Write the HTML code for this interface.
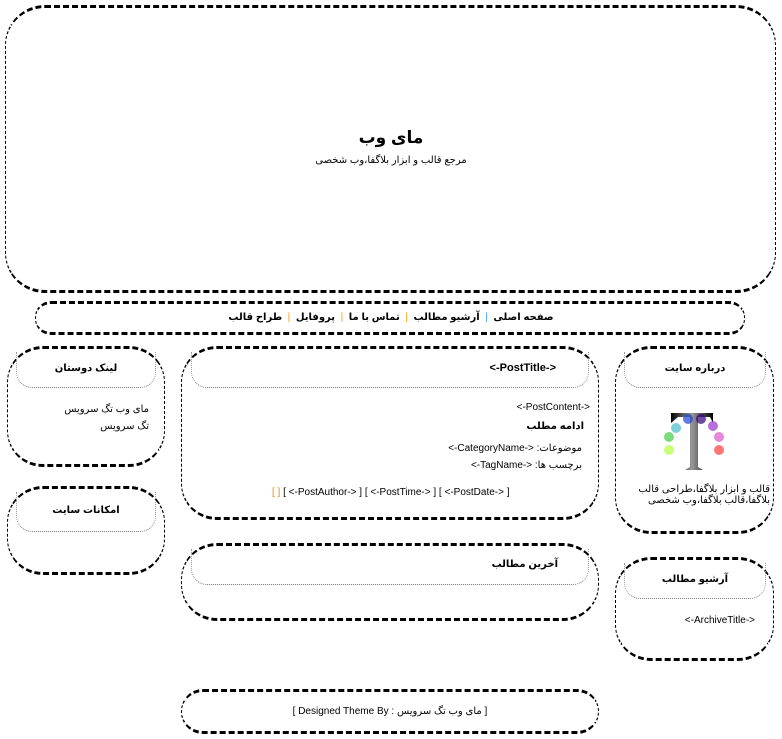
<!DOCTYPE html>
<html dir="rtl"><head><meta charset="utf-8"><style>
*{margin:0;padding:0;box-sizing:border-box}
body{width:782px;height:739px;background:#fff;position:relative;font-family:"Liberation Sans","DejaVu Sans",sans-serif;font-size:10px;color:#000;overflow:hidden}
.b{position:absolute;border-top:3px dashed #000;border-bottom:3px dashed #000;border-left:1px dashed #000;border-right:1px dashed #000;border-radius:36px}
.h{position:absolute;border-bottom:1px dotted #777;border-left:1px dotted #999;border-right:1px dotted #999;border-top:none;border-radius:0 0 16px 16px;text-align:center;font-weight:bold;font-size:10px}
.t{position:absolute;direction:rtl;white-space:nowrap}
</style></head><body>
<div class="b" style="left:5px;top:5px;width:771px;height:288px;border-radius:40px"></div>
<div class="t" style="left:0;width:782px;top:128px;text-align:center;font-size:17px;font-weight:bold">ماى وب</div>
<div class="t" style="left:0;width:782px;top:155px;text-align:center;font-size:10px">مرجع قالب و ابزار بلاگفا،وب شخصی</div>

<div class="b" style="left:35px;top:301px;width:710px;height:34px;border-radius:16px"></div>
<div class="t" style="left:0;width:782px;top:312px;text-align:center;font-size:10px;font-weight:bold">صفحه اصلی <span style="color:#39f;font-weight:normal">&nbsp;|&nbsp;</span> آرشیو مطالب <span style="color:#f90;font-weight:normal">&nbsp;|&nbsp;</span> تماس با ما <span style="color:#f90;font-weight:normal">&nbsp;|&nbsp;</span> پروفایل <span style="color:#f90;font-weight:normal">&nbsp;|&nbsp;</span> طراح قالب</div>

<!-- left -->
<div class="b" style="left:7px;top:346px;width:158px;height:121px"></div>
<div class="h" style="left:16px;top:352px;width:140px;height:36px;padding-top:11px">لینک دوستان</div>
<div class="t" style="right:633px;top:404px">ماى وب تگ سرویس</div>
<div class="t" style="right:633px;top:421px">تگ سرویس</div>
<div class="b" style="left:7px;top:486px;width:158px;height:89px"></div>
<div class="h" style="left:16px;top:492px;width:140px;height:40px;padding-top:13px">امکانات سایت</div>

<!-- center -->
<div class="b" style="left:181px;top:346px;width:418px;height:174px"></div>
<div class="h" style="left:191px;top:352px;width:398px;height:36px;padding-top:10px;text-align:right;padding-right:32px;font-size:11px">&lt;-PostTitle-&gt;</div>
<div class="t" style="right:192px;top:402px">&lt;-PostContent-&gt;</div>
<div class="t" style="right:198px;top:421px;font-weight:bold">ادامه مطلب</div>
<div class="t" style="right:200px;top:443px">موضوعات: &lt;-CategoryName-&gt;</div>
<div class="t" style="right:200px;top:460px">برچسب ها: &lt;-TagName-&gt;</div>
<div class="t" style="left:272px;top:487px;direction:ltr"><span style="color:#e80">[ ]</span> [ &lt;-PostAuthor-&gt; ] [ &lt;-PostTime-&gt; ] [ &lt;-PostDate-&gt; ]</div>

<div class="b" style="left:181px;top:543px;width:418px;height:78px"></div>
<div class="h" style="left:191px;top:549px;width:398px;height:36px;padding-top:10px;text-align:right;padding-right:30px">آخرین مطالب</div>

<div class="b" style="left:181px;top:689px;width:418px;height:45px;border-radius:22px"></div>
<div class="t" style="left:181px;width:418px;top:706px;text-align:center;direction:ltr">[ Designed Theme By : ماى وب تگ سرویس ]</div>

<!-- right -->
<div class="b" style="left:615px;top:346px;width:159px;height:188px"></div>
<div class="h" style="left:624px;top:352px;width:142px;height:36px;padding-top:11px">درباره سایت</div>
<svg style="position:absolute;left:660px;top:410px" width="70" height="65" viewBox="0 0 70 65">
<defs><linearGradient id="g" x1="0" x2="1"><stop offset="0" stop-color="#000"/><stop offset=".5" stop-color="#999"/><stop offset="1" stop-color="#000"/></linearGradient></defs>
<path d="M11 3h42v10l-3-6h-12v50l5 3h-18l5-3V7H18l-7 6z" fill="url(#g)"/>
<circle cx="16" cy="18" r="5" fill="#4bc" opacity=".7"/><circle cx="28" cy="9" r="5" fill="#24c" opacity=".7"/>
<circle cx="41" cy="9" r="5" fill="#307" opacity=".7"/><circle cx="53" cy="16" r="5" fill="#93c" opacity=".7"/>
<circle cx="9" cy="27" r="5" fill="#4c4" opacity=".7"/><circle cx="59" cy="27" r="5" fill="#d5c" opacity=".7"/>
<circle cx="9" cy="40" r="5" fill="#bf5" opacity=".8"/><circle cx="59" cy="40" r="5" fill="#f55" opacity=".8"/>
</svg>
<div class="t" style="right:12px;top:484px;text-align:right;line-height:11px">قالب و ابزار بلاگفا،طراحی قالب<br>بلاگفا،قالب بلاگفا،وب شخصی</div>
<div class="b" style="left:615px;top:557px;width:159px;height:104px"></div>
<div class="h" style="left:624px;top:563px;width:142px;height:36px;padding-top:11px">آرشیو مطالب</div>
<div class="t" style="right:27px;top:615px">&lt;-ArchiveTitle-&gt;</div>
</body></html>
